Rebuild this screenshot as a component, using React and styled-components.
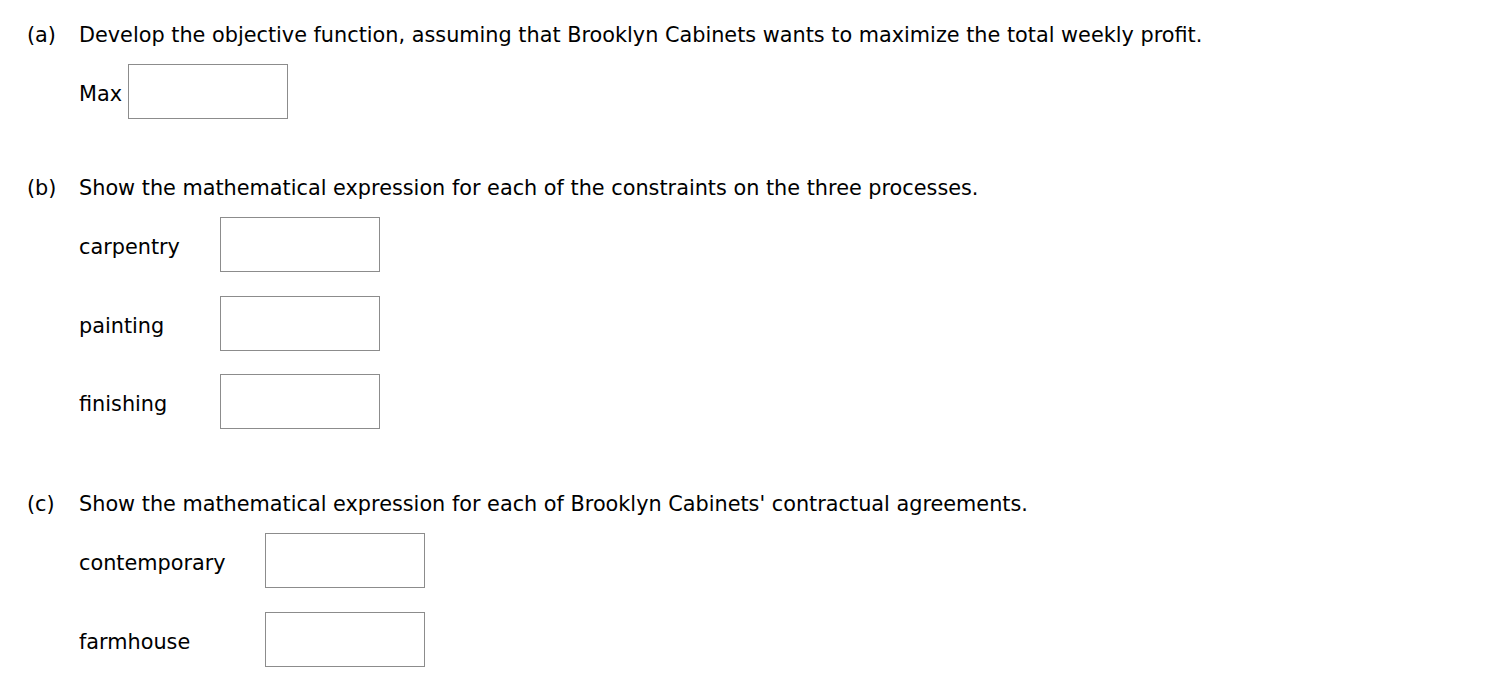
import styled, { createGlobalStyle } from 'styled-components';

const GlobalStyle = createGlobalStyle`
body {
    margin: 0;
    background: #fff;
    font-family: Verdana, "DejaVu Sans", sans-serif;
    color: #000;
}
`;

const sections = [
    {
        tag: '(a)',
        text: 'Develop the objective function, assuming that Brooklyn Cabinets wants to maximize the total weekly profit.',
        gap: 6,
        space: 0,
        rows: ['Max'],
    },
    {
        tag: '(b)',
        text: 'Show the mathematical expression for each of the constraints on the three processes.',
        gap: 40,
        space: 57,
        rows: ['carpentry', 'painting', 'finishing'],
    },
    {
        tag: '(c)',
        text: "Show the mathematical expression for each of Brooklyn Cabinets' contractual agreements.",
        gap: 39,
        space: 63,
        rows: ['contemporary', 'farmhouse'],
    },
];

export const App = () => {
    return (
        <>
        <GlobalStyle />
        <Page>
            {sections.map((s) => (
                <Section key={s.tag} $space={s.space}>
                    <Heading>
                        <Tag>{s.tag}</Tag>
                        <span>{s.text}</span>
                    </Heading>
                    <Fields $gap={s.gap}>
                        {s.rows.map((r) => (
                            <Row key={r}>
                                <Label>{r}</Label>
                                <AnswerBox type="text" aria-label={r} />
                            </Row>
                        ))}
                    </Fields>
                </Section>
            ))}
        </Page>
        </>
    )
}

export default App;

const Page = styled.div`
display: flex;
flex-direction: column;
padding: 23px 0 0 27px;
`;

const Section = styled.div`
display: flex;
flex-direction: column;
gap: 17px;
margin-top: ${(p) => p.$space}px;
`;

const Heading = styled.div`
display: flex;
font-size: 20.8px;
line-height: 24px;
`;

const Tag = styled.span`
width: 52px;
flex-shrink: 0;
`;

const Fields = styled.div`
display: grid;
grid-template-columns: max-content 160px;
column-gap: ${(p) => p.$gap}px;
row-gap: 23.5px;
margin-left: 52px;
`;

const Row = styled.div`
display: contents;
`;

const Label = styled.div`
font-size: 20.8px;
line-height: 24px;
align-self: center;
padding-top: 5px;
`;

const AnswerBox = styled.input`
box-sizing: border-box;
width: 160px;
height: 55px;
border: 1px solid #8c8c8c;
background: #fff;
margin: 0;
padding: 0 6px;
font-size: 19px;
font-family: inherit;
&:focus {
    outline: none;
}
`;
